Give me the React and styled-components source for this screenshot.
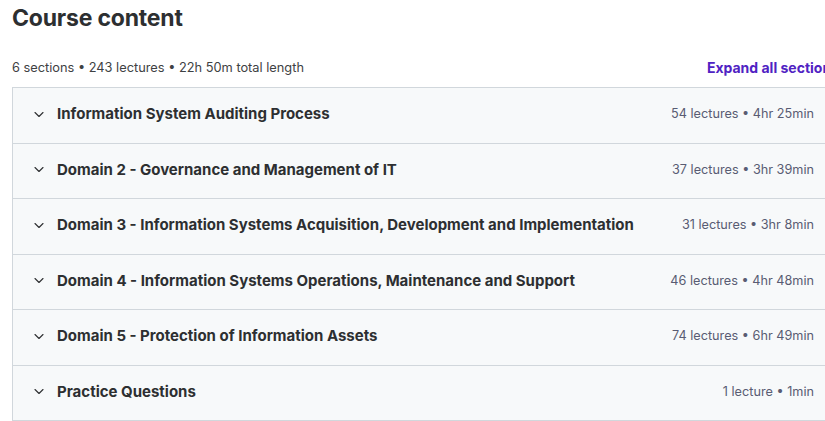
import React from 'react';
import styled, { createGlobalStyle } from 'styled-components';

const sections = [
  { title: 'Information System Auditing Process', meta: '54 lectures • 4hr 25min' },
  { title: 'Domain 2 - Governance and Management of IT', meta: '37 lectures • 3hr 39min' },
  { title: 'Domain 3 - Information Systems Acquisition, Development and Implementation', meta: '31 lectures • 3hr 8min' },
  { title: 'Domain 4 - Information Systems Operations, Maintenance and Support', meta: '46 lectures • 4hr 48min' },
  { title: 'Domain 5 - Protection of Information Assets', meta: '74 lectures • 6hr 49min' },
  { title: 'Practice Questions', meta: '1 lecture • 1min' },
];

const Global = createGlobalStyle`
  html, body {
    margin: 0;
    overflow: hidden;
    background: #fff;
  }
  body {
    font-family: Inter, "Noto Sans", sans-serif;
    color: #2d2f31;
  }
`;

const Page = styled.div`
  width: 827px;
  padding: 0 0 0 12px;
`;

const Heading = styled.h2`
  margin: 0;
  padding-top: 4px;
  font-size: 23px;
  font-weight: 700;
  line-height: 28px;
  letter-spacing: -0.2px;
`;

const Summary = styled.div`
  display: flex;
  justify-content: space-between;
  align-items: center;
  height: 38px;
  margin-top: 16px;
`;

const Stats = styled.span`
  font-size: 12.8px;
  color: #3e4143;
`;

const ExpandLink = styled.button`
  border: 0;
  background: none;
  padding: 0;
  margin-left: -3px;
  font: inherit;
  font-size: 14px;
  font-weight: 700;
  color: #5022c3;
  cursor: pointer;
  white-space: nowrap;
`;

const Panel = styled.div`
  border: 1px solid #d1d7dc;
  border-bottom: 0;
  margin-top: 1px;
`;

const Row = styled.div`
  display: flex;
  align-items: center;
  height: 55.5px;
  box-sizing: border-box;
  padding: 0 24px 3px 20px;
  background: #f7f9fa;
  border-bottom: 1px solid #d1d7dc;
`;

const Chevron = styled.svg`
  flex: none;
  width: 12px;
  height: 12px;
  margin-right: 12px;
`;

const Title = styled.span`
  flex: 1;
  font-size: 15px;
  font-weight: 700;
  color: #2d2f31;
`;

const Meta = styled.span`
  flex: none;
  font-size: 12.7px;
  color: #595c73;
  margin-left: 16px;
`;

export default function App() {
  return (
    <Page>
      <Global />
      <Heading>Course content</Heading>
      <Summary>
        <Stats>6 sections • 243 lectures • 22h 50m total length</Stats>
        <ExpandLink>Expand all sections</ExpandLink>
      </Summary>
      <Panel>
        {sections.map((s) => (
          <Row key={s.title}>
            <Chevron viewBox="0 0 12 12" fill="none">
              <path d="M2 4.5l4 4 4-4" stroke="#2d2f31" strokeWidth="1.1" strokeLinecap="round" strokeLinejoin="round" />
            </Chevron>
            <Title>{s.title}</Title>
            <Meta>{s.meta}</Meta>
          </Row>
        ))}
      </Panel>
    </Page>
  );
}
